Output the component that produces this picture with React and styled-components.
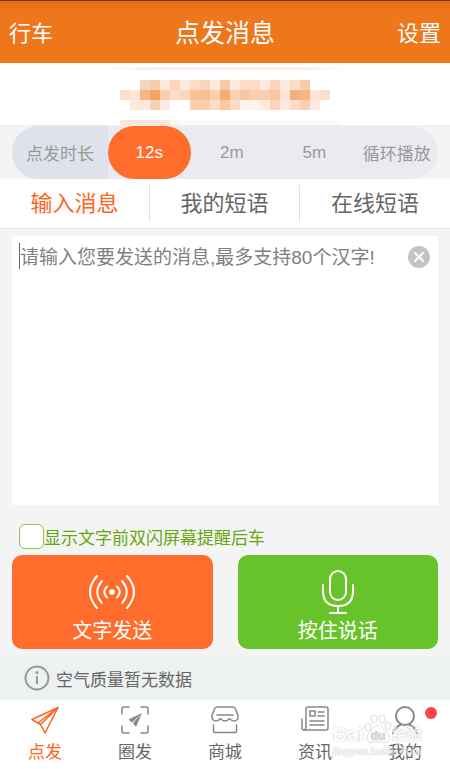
import { useState } from "react";
import styled, { createGlobalStyle } from "styled-components";

const durations = ["12s", "2m", "5m", "循环播放"];
const tabs = ["输入消息", "我的短语", "在线短语"];

// one string of colors per row, "-" is an empty cell
const mosaic = [
  "- - f9d3b8 f8cdae fdeadd fad5bb fdeadd fbddc8 fad3b8 fdeadd f8cba8 fdeadd fbdcc7 fbdcc7 fdeadd fad5bb fdeadf fbdcc8 f8cba9 - -",
  "fbdfcc fce8da f6b585 f3a467 f9cfae fbdcc5 fad7bd f7c197 f7c197 fad0b0 f4ac76 fad2b4 f8c7a2 f9ceae f9ceae f8c7a0 fce6d8 f5b07c f6b686 fce5d6 fbdfcc",
  "- fde9dc fde9dc f9d0b0 fdebe0 - - f9cfae f9cfae fbdcc5 f8c8a2 fbdcc5 fef2ea fef2ea fdeadd fad5b9 fdeadf fbdcc5 f9d0b2 fdeade -",
].map((row) => row.split(" "));

const PlaneIcon = () => (
  <svg width="28" height="28" viewBox="0 0 28 28" fill="none" stroke="currentColor" strokeWidth="1.5" strokeLinejoin="round">
    <path d="M1 13.500 27 1.500 14 27 9.500 18.500Z" />
    <path d="M27 1.500 9.500 18.500M27 1.500 7 17" />
  </svg>
);

const CircleSendIcon = () => (
  <svg width="28" height="28" viewBox="0 0 28 28" fill="none" stroke="currentColor" strokeWidth="1.5" strokeLinecap="round">
    <path d="M1 8V3Q1 1 3 1H8M20 1H25Q27 1 27 3V8M27 20V25Q27 27 25 27H20M8 27H3Q1 27 1 25V20" />
    <path d="M7.500 13.500 21 7 11 16.500Z M21 7 15 21 12 17Z" fill="currentColor" stroke="none" />
  </svg>
);

const ShopIcon = () => (
  <svg width="28" height="28" viewBox="0 0 28 28" fill="none" stroke="currentColor" strokeWidth="1.5" strokeLinecap="round" strokeLinejoin="round">
    <path d="M6 1H22Q24 1 24.500 3L27 9.500Q27.500 14.500 23.500 15 20.500 15 18.500 12.500 16.500 15 14 15 11.500 15 9.500 12.500 7.500 15 4.500 15 .500 14.500 1 9.500L3.500 3Q4 1 6 1Z" />
    <path d="M6 9H22M2.500 19V25Q2.500 26.500 4.500 26.500H23.500Q25.500 26.500 25.500 25V19" />
  </svg>
);

const NewsIcon = () => (
  <svg width="28" height="28" viewBox="0 0 28 28" fill="none" stroke="currentColor" strokeWidth="1.5" strokeLinecap="round">
    <path d="M5 20V3Q5 1 7 1H25Q27 1 27 3V22Q27 24 25 24H3Q1 24 1 22V13" />
    <path d="M5 20Q5 24 3 24M17 6H23M17 10H23M9 15H23M9 19H23" />
    <rect x="9" y="5" width="5" height="5" />
  </svg>
);

const UserIcon = () => (
  <svg width="28" height="28" viewBox="0 0 28 28" fill="none" stroke="currentColor" strokeWidth="2" strokeLinecap="round">
    <circle cx="14" cy="10" r="9" />
    <path d="M2 27Q4.500 20.500 10 18.500M18 18.500Q23.500 20.500 26 27" />
  </svg>
);

const SignalIcon = () => (
  <svg width="48" height="36" viewBox="0 0 48 36" fill="none" stroke="currentColor" strokeWidth="2" strokeLinecap="round">
    <circle cx="24" cy="18" r="2.800" fill="currentColor" stroke="none" />
    <path d="M19 12.500Q13.500 18 19 23.500M29 12.500Q34.500 18 29 23.500" />
    <path d="M14 7Q4.500 18 14 29M34 7Q43.500 18 34 29" />
    <path d="M9 2Q-5 18 9 34M39 2Q53 18 39 34" />
  </svg>
);

const MicIcon = () => (
  <svg width="34" height="44" viewBox="0 0 34 44" fill="none" stroke="currentColor" strokeWidth="2" strokeLinecap="round">
    <rect x="9" y="1" width="16" height="29" rx="8" />
    <path d="M2 15V21Q2 36 17 36 32 36 32 21V15M17 36V43M9 43H25" />
  </svg>
);

const PawIcon = () => (
  <svg width="28" height="30" viewBox="0 0 28 30" fill="#fff" stroke="#d0d0d0">
    <ellipse cx="4" cy="13" rx="3" ry="4" />
    <ellipse cx="10" cy="5" rx="3" ry="4" />
    <ellipse cx="18" cy="5" rx="3" ry="4" />
    <ellipse cx="24" cy="12" rx="3" ry="4" />
    <path d="M14 11C18 11 19 16 23 19 27 23 25 29 20 28.500 16 27.500 12 27.500 8 28.500 3 29 1 23 5 19 9 16 10 11 14 11Z" />
    <text x="14" y="26" textAnchor="middle" fontSize="12" fontWeight="700" fill="#ccc" stroke="none">du</text>
  </svg>
);

const navItems = [
  { label: "点发", Icon: PlaneIcon },
  { label: "圈发", Icon: CircleSendIcon },
  { label: "商城", Icon: ShopIcon },
  { label: "资讯", Icon: NewsIcon },
  { label: "我的", Icon: UserIcon, dot: true },
];

export default function App() {
  const [duration, setDuration] = useState("12s");
  const [tab, setTab] = useState("输入消息");
  const [message, setMessage] = useState("");
  const [flash, setFlash] = useState(false);

  return (
    <>
      <GlobalStyle />
      <Spage>
        <Sheader>
          <SheaderLink href="#drive">行车</SheaderLink>
          <Stitle>点发消息</Stitle>
          <SheaderLink href="#settings" $right>
            设置
          </SheaderLink>
        </Sheader>

        <Sbanner>
          <svg width="250" height="62" viewBox="0 0 250 62" shapeRendering="crispEdges">
            <defs>
              <linearGradient id="streak">
                <stop offset="0" stopColor="#fdf0e8" stopOpacity="0" />
                <stop offset="0.2" stopColor="#fdf0e8" />
                <stop offset="0.8" stopColor="#fdeee4" />
                <stop offset="1" stopColor="#fdf0e8" stopOpacity="0" />
              </linearGradient>
            </defs>
            <rect y="4" width="250" height="3" fill="url(#streak)" />
            <rect x="20" y="57" width="220" height="5" fill="#fcfbfb" />
            <rect x="20" y="57" width="50" height="5" fill="#fde5da" />
            <rect x="70" y="57" width="10" height="5" fill="#fdf5f1" />
            {mosaic.map((row, y) =>
              row.map(
                (color, x) =>
                  color !== "-" && (
                    <rect key={`${x}-${y}`} x={20 + x * 10} y={17 + y * 10} width="10" height="10" fill={`#${color}`} />
                  )
              )
            )}
          </svg>
        </Sbanner>

        <Sduration>
          <Spill>
            <SpillTitle>点发时长</SpillTitle>
            {durations.map((item) => (
              <Soption key={item} $active={item === duration}>
                <Sradio
                  type="radio"
                  name="duration"
                  checked={item === duration}
                  onChange={() => setDuration(item)}
                />
                {item}
              </Soption>
            ))}
          </Spill>
        </Sduration>

        <Stabs>
          {tabs.map((item) => (
            <Stab key={item} type="button" $active={item === tab} onClick={() => setTab(item)}>
              {item}
            </Stab>
          ))}
        </Stabs>

        <Smain>
          <Seditor>
            <Stextarea
              aria-label="输入消息"
              placeholder="请输入您要发送的消息,最多支持80个汉字!"
              maxLength={80}
              value={message}
              onChange={(e) => setMessage(e.target.value)}
            />
            {!message && <Scaret />}
            <Sclear type="button" aria-label="清空" onClick={() => setMessage("")}>
              <svg width="10" height="10" viewBox="0 0 10 10" stroke="#fff" strokeWidth="2" strokeLinecap="round">
                <path d="M1 1 9 9M9 1 1 9" />
              </svg>
            </Sclear>
          </Seditor>
          <Scheck>
            <Scheckbox type="checkbox" checked={flash} onChange={(e) => setFlash(e.target.checked)} />
            显示文字前双闪屏幕提醒后车
          </Scheck>
          <Sactions>
            <Sbutton type="button" $color="#ff6c2c">
              <SbuttonIcon>
                <SignalIcon />
              </SbuttonIcon>
              文字发送
            </Sbutton>
            <Sbutton type="button" $color="#68c32a">
              <SbuttonIcon>
                <MicIcon />
              </SbuttonIcon>
              按住说话
            </Sbutton>
          </Sactions>
        </Smain>

        <Sinfo>
          <svg width="26" height="26" viewBox="0 0 26 26" fill="none" stroke="#999" strokeWidth="2">
            <circle cx="13" cy="13" r="11.500" />
            <path d="M13 11V19" />
            <circle cx="13" cy="7.500" r="1.500" fill="#999" stroke="none" />
          </svg>
          空气质量暂无数据
        </Sinfo>

        <Snav>
          {navItems.map(({ label, Icon, dot }, i) => (
            <SnavLink key={label} href={`#nav-${i}`} $active={i === 0}>
              <Icon />
              <SnavLabel $active={i === 0}>{label}</SnavLabel>
              {dot && <Sdot />}
            </SnavLink>
          ))}
          <Swatermark>
            <Sbrand>
              Bai
              <PawIcon />
              <SbrandSub>经验</SbrandSub>
            </Sbrand>
            <Surl>jingyan.baidu.com</Surl>
          </Swatermark>
        </Snav>
      </Spage>
    </>
  );
}

const GlobalStyle = createGlobalStyle`
  * {
    box-sizing: border-box;
  }
  body {
    margin: 0;
    font-family: "Liberation Sans", "Noto Sans CJK SC", sans-serif;
    background: #f4f4f4;
  }
  button, textarea, input {
    font-family: inherit;
  }
  svg {
    display: block;
    flex: none;
  }
`;

const Spage = styled.div`
  display: flex;
  flex-direction: column;
  min-height: 100vh;
`;

const Sheader = styled.header`
  display: grid;
  grid-template-columns: 1fr auto 1fr;
  align-items: center;
  height: 63px;
  padding: 0 9px 2px;
  border-top: 1px solid #70360f;
  background: linear-gradient(#e36e17, #ee761b 10px);
  color: #fff;
`;
const SheaderLink = styled.a`
  font-size: 22px;
  color: #fff;
  text-decoration: none;
  text-align: ${({ $right }) => ($right ? "right" : "left")};
`;
const Stitle = styled.h1`
  margin: 0;
  font-size: 25px;
  font-weight: 400;
`;

const Sbanner = styled.div`
  display: flex;
  justify-content: center;
  height: 62px;
  background: #fff;
`;

const Sduration = styled.div`
  padding: 0 12px;
  border-top: 1px solid #efefef;
`;
const Spill = styled.div`
  display: grid;
  grid-template-columns: 96px repeat(4, 1fr);
  height: 53px;
  border-radius: 27px;
  overflow: hidden;
  background: #ebeaf0;
  color: #999;
  font-size: 17px;
`;
const SpillTitle = styled.span`
  display: flex;
  align-items: center;
  justify-content: center;
  background: #dfe2ea;
`;
const Soption = styled.label`
  display: flex;
  align-items: center;
  justify-content: center;
  border-radius: 27px;
  cursor: pointer;
  color: ${({ $active }) => ($active ? "#fff" : "inherit")};
  background: ${({ $active }) => ($active ? "#ff6c2c" : "transparent")};
`;
const Sradio = styled.input`
  position: absolute;
  appearance: none;
  margin: 0;
`;

const Stabs = styled.div`
  display: grid;
  grid-template-columns: repeat(3, 1fr);
  height: 50px;
  padding: 6px 0;
  border-bottom: 1px solid #e6e6e6;
  background: #fff;
`;
const Stab = styled.button`
  padding: 0 0 5px;
  border: none;
  border-right: 1px solid #e0e0e0;
  background: none;
  font-size: 22px;
  color: ${({ $active }) => ($active ? "#ff6420" : "#666")};
  &:last-of-type {
    border-right: none;
  }
`;

const Smain = styled.main`
  display: flex;
  flex: 1;
  flex-direction: column;
  padding: 7px 12px;
`;
const Seditor = styled.div`
  position: relative;
  display: flex;
  flex: 1;
  min-height: 120px;
`;
const Stextarea = styled.textarea`
  flex: 1;
  padding: 10px 40px 8px 8px;
  border: none;
  outline: none;
  resize: none;
  background: #fff;
  color: #444;
  font-size: 19px;
  line-height: 24px;
  &::placeholder {
    color: #808080;
  }
`;
const Scaret = styled.span`
  position: absolute;
  top: 7px;
  left: 7px;
  width: 1px;
  height: 26px;
  background: #666;
`;
const Sclear = styled.button`
  position: absolute;
  top: 10px;
  right: 8px;
  display: flex;
  align-items: center;
  justify-content: center;
  width: 22px;
  height: 22px;
  padding: 0;
  border: none;
  border-radius: 50%;
  background: #c4c4c4;
`;

const Scheck = styled.label`
  display: flex;
  align-items: center;
  align-self: flex-start;
  height: 25px;
  margin: 19px 0 6px 7px;
  font-size: 17px;
  color: #64a80e;
`;
const Scheckbox = styled.input`
  appearance: none;
  width: 25px;
  height: 25px;
  margin: 0;
  border: 1px solid #8cc455;
  border-radius: 6px;
  background: #fff;
  &:checked {
    background: #68c32a;
  }
`;

const Sactions = styled.div`
  display: grid;
  grid-template-columns: 1fr 1fr;
  gap: 25px;
`;
const Sbutton = styled.button`
  display: flex;
  flex-direction: column;
  align-items: center;
  height: 94px;
  padding: 14px 0 0;
  border: none;
  border-radius: 10px;
  background: ${({ $color }) => $color};
  color: #fff;
  font-size: 20px;
  line-height: 32px;
`;
const SbuttonIcon = styled.span`
  display: flex;
  align-items: center;
  height: 46px;
`;

const Sinfo = styled.div`
  display: flex;
  align-items: center;
  gap: 6px;
  height: 44px;
  padding: 0 24px;
  background: #edf1f2;
  color: #666;
  font-size: 17px;
`;

const Snav = styled.nav`
  position: relative;
  display: grid;
  grid-template-columns: repeat(5, 1fr);
  height: 69px;
  background: #fff;
`;
const SnavLink = styled.a`
  position: relative;
  display: flex;
  flex-direction: column;
  align-items: center;
  gap: 7px;
  padding-top: 6px;
  color: ${({ $active }) => ($active ? "#ff6420" : "#888")};
  font-size: 17px;
  line-height: 24px;
  text-decoration: none;
`;
const SnavLabel = styled.span`
  color: ${({ $active }) => ($active ? "#ff6420" : "#666")};
`;
const Sdot = styled.span`
  position: absolute;
  top: 7px;
  right: 13px;
  width: 12px;
  height: 12px;
  border-radius: 50%;
  background: #ff4444;
`;

const Swatermark = styled.div`
  position: absolute;
  right: 28px;
  bottom: 11px;
  opacity: 0.7;
  pointer-events: none;
  color: #fff;
  text-shadow: 0 0 1px #aaa, 0 0 1px #aaa;
`;
const Sbrand = styled.div`
  display: flex;
  align-items: flex-end;
  height: 30px;
  font-size: 20px;
  font-weight: 700;
  line-height: 20px;
`;
const SbrandSub = styled.span`
  font-size: 15px;
`;
const Surl = styled.div`
  font-size: 11px;
  line-height: 14px;
`;
